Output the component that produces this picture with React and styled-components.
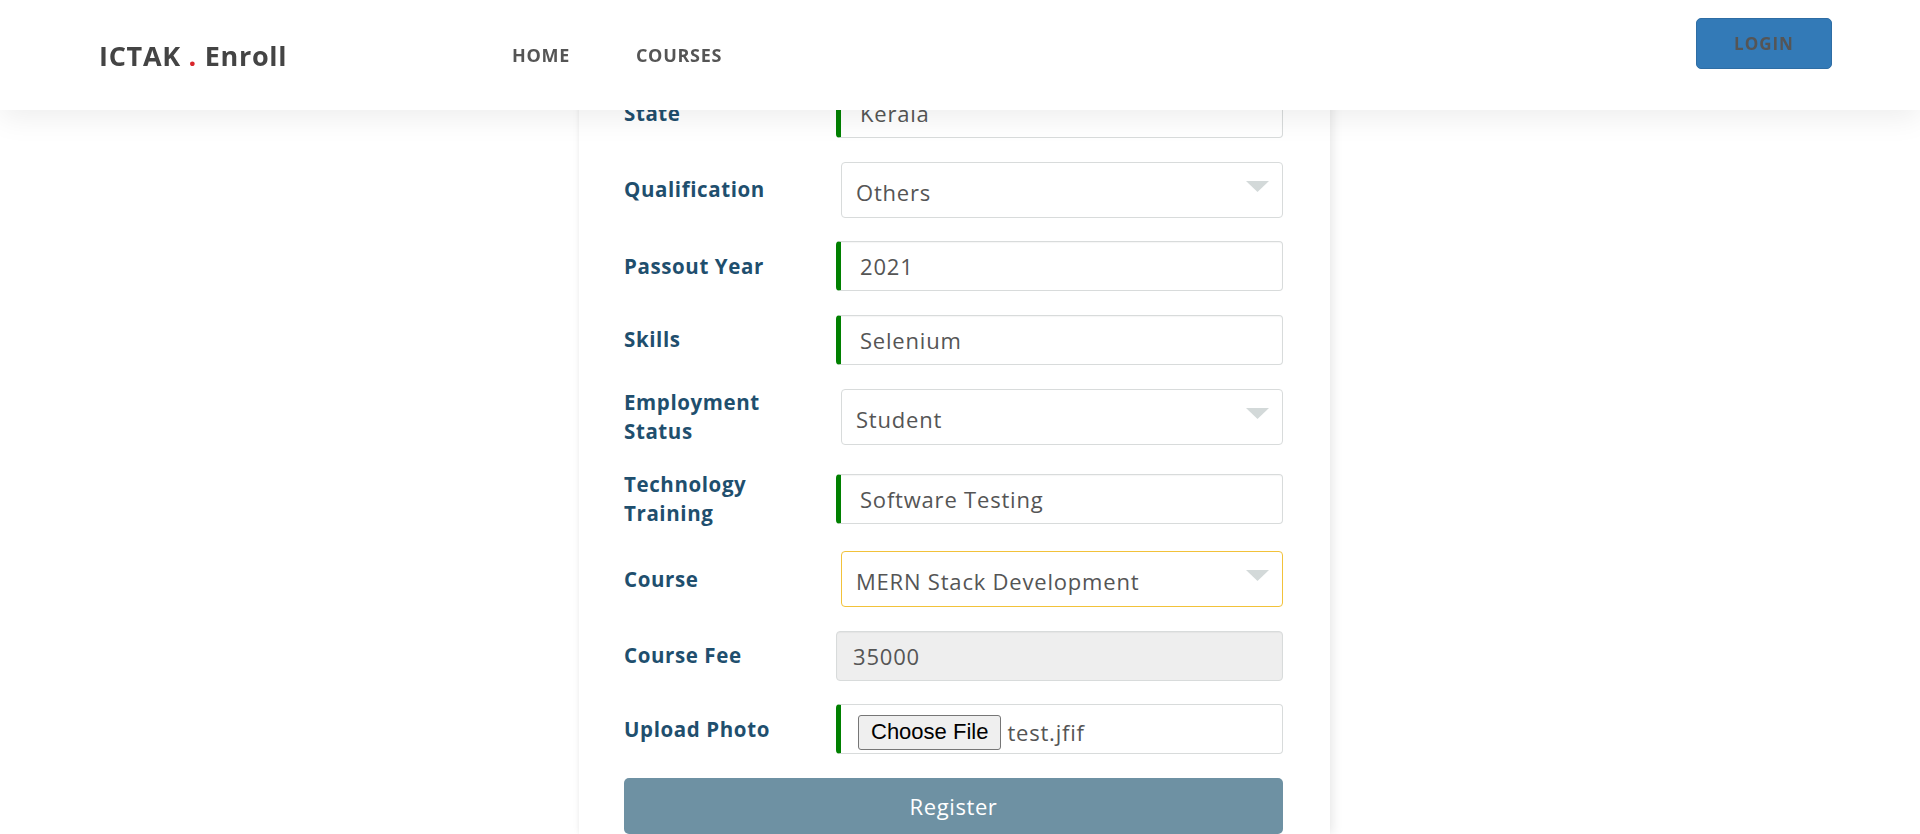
import React from "react";
import styled, { createGlobalStyle } from "styled-components";

const Global = createGlobalStyle`
  html, body { margin: 0; padding: 0; background: #fff; }
  body { font-family: "Open Sans", "Liberation Sans", sans-serif; overflow: hidden; }
  * { box-sizing: border-box; }
`;

const NavBar = styled.header`
  position: fixed;
  top: 0; left: 0; right: 0;
  height: 110px;
  background: #fff;
  box-shadow: 0 8px 28px rgba(0, 0, 0, 0.07);
  display: flex;
  align-items: center;
  padding: 0 88px 0 99px;
  z-index: 10;
`;

const Logo = styled.div`
  width: 413px;
  font-size: 27px;
  font-weight: 700;
  color: #444;
  letter-spacing: 0.7px;
  span { color: #d8262c; }
`;

const NavLinks = styled.nav`
  display: flex;
  gap: 66px;
`;

const NavLink = styled.a`
  font-size: 18px;
  font-weight: 700;
  color: #555;
  text-decoration: none;
  letter-spacing: 0.7px;
`;

const LoginButton = styled.button`
  margin-left: auto;
  margin-top: -23px;
  width: 136px;
  height: 51px;
  background: #337ab7;
  border: 1px solid #2e6da4;
  border-radius: 5px;
  color: #555;
  font-family: inherit;
  font-size: 17px;
  font-weight: 700;
  letter-spacing: 1px;
`;

const Main = styled.main`
  padding-bottom: 40px;
`;

const Card = styled.section`
  width: 751px;
  margin-left: calc(50% - 381px);
  background: #fff;
  box-shadow: 3px 0 10px rgba(0, 0, 0, 0.09), -1px 0 3px rgba(0, 0, 0, 0.03);
  padding: 88px 47px 0 45px;
  display: flex;
  flex-direction: column;
  gap: 23.5px;
`;

const Row = styled.div`
  display: grid;
  grid-template-columns: 212px 1fr;
  align-items: center;
`;

const Label = styled.label`
  font-size: 20.5px;
  font-weight: 700;
  color: #1f4f6e;
  line-height: 29px;
  letter-spacing: 0.6px;
`;

const TextInput = styled.input`
  width: 100%;
  height: 50px;
  border: 1px solid #d8dbdb;
  border-left: ${(p) => (p.$accent ? "5px solid #008000" : "1px solid #d8dbdb")};
  border-radius: 4px;
  background: ${(p) => (p.disabled ? "#eee" : "#fff")};
  padding-left: ${(p) => (p.$accent ? "19px" : "16px")};
  font-family: inherit;
  font-size: 22px;
  letter-spacing: 0.8px;
  color: #555;
  box-shadow: inset 0 1px 1px rgba(0, 0, 0, 0.04);
  outline: none;
  &:disabled { color: #555; -webkit-text-fill-color: #555; opacity: 1; }
`;

const SelectWrap = styled.div`
  position: relative;
  margin-left: 5px;
`;

const Select = styled.select`
  appearance: none;
  -webkit-appearance: none;
  width: 100%;
  height: 56px;
  border: 1px solid ${(p) => (p.$focus ? "#f2c23a" : "#d8dbdb")};
  border-radius: 4px;
  background: #fff;
  padding: 4px 0 0 14px;
  font-family: inherit;
  font-size: 22px;
  letter-spacing: 0.8px;
  color: #555;
  outline: none;
`;

const Arrow = styled.svg`
  position: absolute;
  right: 14px;
  top: 19px;
  pointer-events: none;
`;

const FileBox = styled.div`
  height: 50px;
  border: 1px solid #d8dbdb;
  border-left: 5px solid #008000;
  border-radius: 4px;
  background: #fff;
  display: flex;
  align-items: center;
  padding: 2px 0 0 17px;
  gap: 6px;
`;

const FileButton = styled.button`
  height: 35px;
  padding: 0 12px;
  margin-top: 4px;
  background: #efefef;
  border: 1px solid #767676;
  border-radius: 3px;
  font-family: "Liberation Sans", Arial, sans-serif;
  font-size: 22px;
  color: #000;
`;

const FileName = styled.span`
  font-size: 22px;
  letter-spacing: 0.8px;
  margin-top: 4px;
  color: #555;
`;

const RegisterButton = styled.button`
  width: 100%;
  height: 56px;
  background: #6e91a3;
  border: none;
  border-radius: 5px;
  color: #fff;
  font-family: inherit;
  font-size: 22px;
  letter-spacing: 0.6px;
`;

function Dropdown({ value, focus }) {
  return (
    <SelectWrap>
      <Select $focus={focus} defaultValue={value}>
        <option>{value}</option>
      </Select>
      <Arrow width="23" height="11" viewBox="0 0 23 11">
        <polygon points="0,0 23,0 11.5,11" fill="#d3d9d9" />
      </Arrow>
    </SelectWrap>
  );
}

export default function App() {
  return (
    <>
      <Global />
      <NavBar>
        <Logo>
          ICTAK <span>.</span> Enroll
        </Logo>
        <NavLinks>
          <NavLink href="#">HOME</NavLink>
          <NavLink href="#">COURSES</NavLink>
        </NavLinks>
        <LoginButton>LOGIN</LoginButton>
      </NavBar>
      <Main>
        <Card>
          <Row>
            <Label>State</Label>
            <TextInput $accent defaultValue="Kerala" />
          </Row>
          <Row>
            <Label>Qualification</Label>
            <Dropdown value="Others" />
          </Row>
          <Row>
            <Label>Passout Year</Label>
            <TextInput $accent defaultValue="2021" />
          </Row>
          <Row>
            <Label>Skills</Label>
            <TextInput $accent defaultValue="Selenium" />
          </Row>
          <Row>
            <Label>
              Employment
              <br />
              Status
            </Label>
            <Dropdown value="Student" />
          </Row>
          <Row>
            <Label>
              Technology
              <br />
              Training
            </Label>
            <TextInput $accent defaultValue="Software Testing" />
          </Row>
          <Row>
            <Label>Course</Label>
            <Dropdown value="MERN Stack Development" focus />
          </Row>
          <Row>
            <Label>Course Fee</Label>
            <TextInput disabled defaultValue="35000" />
          </Row>
          <Row>
            <Label>Upload Photo</Label>
            <FileBox>
              <FileButton>Choose File</FileButton>
              <FileName>test.jfif</FileName>
            </FileBox>
          </Row>
          <RegisterButton>Register</RegisterButton>
        </Card>
      </Main>
    </>
  );
}
